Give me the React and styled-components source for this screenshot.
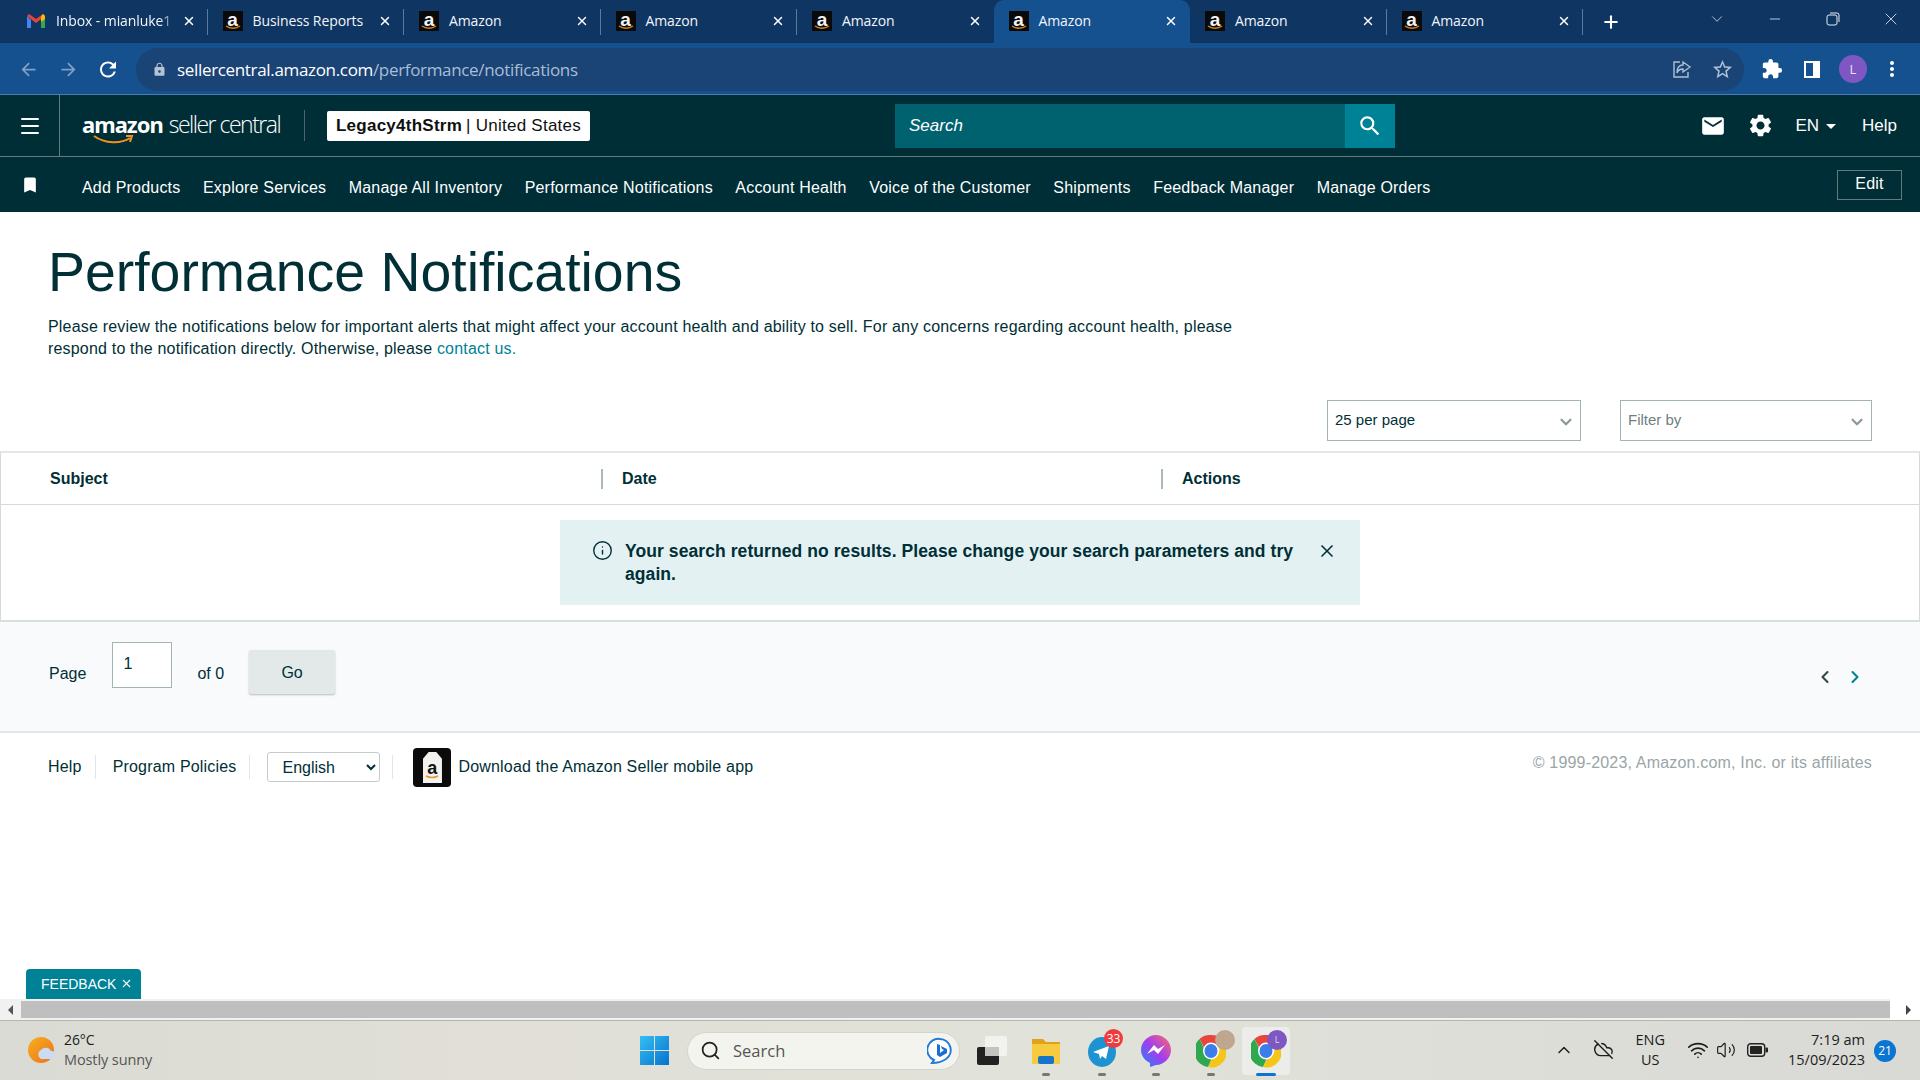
import React from 'react';
import styled, { createGlobalStyle } from 'styled-components';
import { MdArrowBack, MdArrowForward, MdRefresh, MdLock, MdStarBorder, MdExtension, MdMoreVert, MdBookmark, MdEmail, MdSettings, MdSearch, MdArrowDropDown } from 'react-icons/md';
import { X, ChevronDown, ChevronUp, ChevronLeft, ChevronRight, Info, Wifi, Volume2, CloudOff, Plus, Minus, Menu, Search as SearchIcon } from 'lucide-react';

const Global = createGlobalStyle`
  html, body { margin: 0; padding: 0; background: #fff; }
  * { box-sizing: border-box; }
  body { font-family: "Liberation Sans", Arial, sans-serif; color: #002f36; }
`;

const Page = styled.div`
  width: 1920px; height: 1080px; overflow: hidden;
  display: flex; flex-direction: column;
`;

/* ---------- browser chrome ---------- */
const TabStrip = styled.div`
  height: 43px; flex: none; background: #0f3563; display: flex; padding-left: 11px; color: #fff;
  font-family: "Open Sans", sans-serif; font-size: 14px;
`;
const Tab = styled.div`
  width: 196.5px; height: 43px; flex: none; display: flex; align-items: center; padding: 0 12px 2px 15px;
  position: relative; border-radius: 10px 10px 0 0;
  background: ${p => p.$active ? '#15508f' : 'transparent'};
  &::after {
    content: ''; position: absolute; right: 0; top: 9px; height: 26px; width: 1px;
    background: ${p => p.$sep ? '#5d7a9c' : 'transparent'};
  }
`;
const TabTitle = styled.span`
  flex: 1; margin-left: 10px; white-space: nowrap; letter-spacing: -0.1px; line-height: 20px; color: #f2f6fa;
  ${p => p.$fade ? 'overflow: hidden; mask-image: linear-gradient(90deg, #000 85%, transparent 100%);' : ''}
`;
const Favicon = styled.span`
  width: 20px; height: 20px; flex: none; background: #0a0a0a; position: relative; display: block;
  color: #f4f4f4; font: bold 19px/18px "Liberation Sans", sans-serif; text-align: center;
  svg { position: absolute; left: 2px; bottom: 1px; }
`;
const TabClose = styled(X)`
  width: 14px; height: 14px; flex: none; margin-left: 4px; stroke-width: 2.5; color: #fff;
`;
const NewTab = styled(Plus)`
  width: 20px; height: 20px; margin: 1px 0 0 18px; align-self: center; stroke-width: 2.5;
`;
const WindowControls = styled.div`
  margin-left: auto; display: flex; align-items: flex-start; color: #e5ecf3; padding-top: 10px;
`;
const WinGlyph = styled.span`
  width: 58px; height: 18px; flex: none; display: flex; align-items: center; justify-content: center;
`;
const ToolBar = styled.div`
  height: 52px; flex: none; background: #15508f; border-bottom: 1px solid #4b7db5;
  display: flex; align-items: center; padding: 1px 0 0 16px; color: #fff;
`;
const NavBtn = styled.span`
  width: 24px; height: 24px; margin-right: 16px; flex: none; display: flex; align-items: center; justify-content: center;
  color: ${p => p.$dim ? '#7fa0c6' : '#fff'};
`;
const Omnibox = styled.div`
  width: 1608px; height: 43px; margin-left: 0; background: #1a4475; border-radius: 22px; flex: none;
  display: flex; align-items: center; padding: 0 0 0 16px; font: 17px "Open Sans", sans-serif; letter-spacing: -0.33px; color: #fff;
`;
const UrlPath = styled.span` color: #a9bdd5; `;
const OmniRight = styled.div`
  margin-left: auto; display: flex; align-items: center; gap: 19px; padding-right: 10px; color: #aebfd3;
`;
const UrlLock = styled(MdLock)` color: #b3c3d6; margin-right: 10px; flex: none; `;
const ToolIcons = styled.div`
  display: flex; align-items: center; color: #fff; margin-left: 17px; gap: 18px;
`;
const SidePanel = styled.svg` margin-left: 2px; `;
const MoreDots = styled(MdMoreVert)` margin-left: -5px; `;
const Avatar = styled.span`
  width: 28px; height: 28px; border-radius: 50%; background: #7e57c2; color: #e9e0f7; display: flex; align-items: center; justify-content: center;
  font: 13px "Open Sans", sans-serif; flex: none;
`;

/* ---------- seller header ---------- */
const SellerHeader = styled.header`
  height: 62px; flex: none; background: #002e36; border-bottom: 1px solid #66797c; display: flex; align-items: center; color: #fff;
`;
const Burger = styled.div`
  width: 60px; height: 61px; flex: none; border-right: 1px solid #66797c; display: flex; align-items: center; justify-content: center;
`;
const Logo = styled.div`
  margin-left: 22px; margin-right: 24px; width: 198px; flex: none; position: relative; display: flex; align-items: baseline; height: 34px; white-space: nowrap;
  svg { position: absolute; left: 11px; top: 26px; }
`;
const LogoAmazon = styled.span`
  font: bold 22px/30px "Noto Sans", sans-serif; letter-spacing: -1px;
`;
const LogoSeller = styled.span`
  margin-left: 6px; font: 300 23px/30px "Open Sans", sans-serif; letter-spacing: -1.5px;
`;
const VLine = styled.span`
  width: 1px; height: ${p => p.$h || 24}px; flex: none; background: ${p => p.$c || '#4d6468'}; display: block;
`;
const StoreBox = styled.div`
  margin-left: 22px; width: 263px; height: 30px; flex: none; background: #fff; border-radius: 2px; color: #0f1111;
  display: flex; align-items: center; justify-content: center; font-size: 17px; letter-spacing: .25px; white-space: nowrap;
  b { font-weight: bold; margin-right: 4px; }
`;
const SearchBox = styled.div`
  margin-left: 305px; width: 500px; height: 44px; flex: none; display: flex; background: #00616f;
`;
const SearchField = styled.div`
  flex: 1; padding-left: 14px; display: flex; align-items: center; font-style: italic; font-size: 17px;
`;
const SearchBtn = styled.div`
  width: 50px; background: #008296; display: flex; align-items: center; justify-content: center;
`;
const HeaderRight = styled.div`
  margin-left: auto; display: flex; align-items: center; padding-right: 23px; font-size: 17px;
`;
const Lang = styled.span`
  display: flex; align-items: center; margin: 0 19px 0 13px;
`;
const Gear = styled(MdSettings)` margin-left: 21px; margin-right: 8px; `;

/* ---------- favourites nav ---------- */
const FavNav = styled.nav`
  height: 55px; flex: none; background: #002e36; color: #fff; display: flex; align-items: center; font-size: 16px; letter-spacing: .2px; padding: 7px 0 0 20px; white-space: nowrap;
`;
const Bookmark = styled(MdBookmark)` margin: -6px 0 0 0; flex: none; `;
const FavLinks = styled.div`
  display: flex; gap: 22.5px; margin-left: 42px;
`;
const EditBtn = styled.div`
  margin: -7px 18px 0 auto; width: 65px; height: 30px; border: 1px solid #66797c; display: flex; align-items: center; justify-content: center; padding-bottom: 2px;
`;

/* ---------- content ---------- */
const Main = styled.main`
  flex: 1; position: relative; background: #fff; display: flex; flex-direction: column;
`;
const Intro = styled.div` padding: 30px 48px 0; `;
const Title = styled.h1`
  margin: 0; font-weight: normal; font-size: 55.4px; line-height: 60px; color: #002f36;
`;
const Lead = styled.p`
  margin: 14px 0 0; font-size: 16px; line-height: 22px; letter-spacing: .185px; color: #002f36;
  a { color: #008296; text-decoration: none; }
`;
const Controls = styled.div`
  margin-top: 40px; height: 41px; display: flex; justify-content: flex-end; gap: 39px; padding-right: 48px; flex: none;
`;
const Drop = styled.div`
  width: ${p => p.$w}px; height: 41px; border: 1px solid #a2b4b4; display: flex; align-items: center; justify-content: space-between;
  padding: 0 5px 2px 7px; font-size: 15px; color: ${p => p.$muted ? '#6f7f82' : '#002f36'};
  svg { color: #8a9a9c; margin-top: 5px; }
`;
const Table = styled.section`
  margin-top: 10px; border-top: 2px solid #e3e7e7; border-left: 1px solid #d5dbdb; border-right: 1px solid #d5dbdb; flex: none;
`;
const HeadRow = styled.div`
  height: 52px; border-bottom: 1px solid #d5dbdb; display: grid; grid-template-columns: 600px 560px 1fr; align-items: center; font-weight: bold; font-size: 16px;
`;
const HeadCell = styled.div`
  height: 20px; display: flex; align-items: center; padding-left: ${p => p.$first ? 49 : 19}px;
  border-left: ${p => p.$first ? 'none' : '2px solid #a9b9b9'};
`;
const EmptyRow = styled.div`
  height: 115px; padding-top: 15px; display: flex; justify-content: center;
`;
const Alert = styled.div`
  width: 800px; height: 85px; background: #e3f1f3; display: flex; align-items: flex-start; padding: 20px 0 0 32px;
`;
const AlertIcon = styled(Info)` flex: none; margin: 0; `;
const AlertText = styled.div`
  width: 672px; margin-left: 12px; font-weight: bold; font-size: 17.5px; letter-spacing: .08px; line-height: 23px; color: #002f36;
`;
const AlertClose = styled(X)` flex: none; margin: 1px 0 0 20px; `;
const Pager = styled.div`
  height: 113px; flex: none; background: #f9fafb; border-top: 2px solid #d9dfdf; border-bottom: 2px solid #e3e6e6; display: flex; align-items: flex-start; padding-left: 49px; font-size: 16px;
`;
const PagerLabel = styled.span` margin-top: 43px; `;
const PageInput = styled.input`
  width: 60px; height: 46px; margin: 20px 25px 0 26px; border: 1px solid #a2b4b4; background: #fff; padding: 0 0 3px 10px; font: 16px "Liberation Sans", sans-serif; color: #002f36; border-radius: 0; outline: none;
`;
const GoBtn = styled.div`
  width: 86px; height: 44px; margin: 28px 0 0 25px; background: #e3e9e9; border-radius: 2px; box-shadow: 0 1px 2px rgba(0,0,0,.25); display: flex; align-items: center; justify-content: center; padding-top: 1px;
`;
const PagerArrows = styled.div`
  margin: 45px 55px 0 auto; display: flex; gap: 10px;
`;
const Foot = styled.footer`
  height: 60px; flex: none; display: flex; align-items: center; padding: 8px 48px 0 48px; font-size: 16px; letter-spacing: .18px; color: #002f36;
`;
const FootLink = styled.span` white-space: nowrap; `;
const FootSep = styled(VLine)` margin: 0 ${p => p.$r || 17}px 0 ${p => p.$l || 13}px; `;
const LangSelect = styled.select`
  width: 113px; height: 30px; border: 1px solid #c3cccc; border-radius: 3px; background: #fff; padding-left: 10px; font: 16px "Liberation Sans", sans-serif; color: #002f36;
`;
const AppBadge = styled.span`
  width: 38px; height: 39px; flex: none; margin-right: 7px; background: #0b0b0b; border-radius: 4px; display: flex; align-items: center; justify-content: center; position: relative;
  svg { position: absolute; left: 12px; bottom: 8px; }
`;
const AppTag = styled.span`
  width: 19px; height: 31px; margin-top: 1px; background: #f2f2ee; clip-path: polygon(30% 0, 70% 0, 100% 22%, 100% 100%, 0 100%, 0 22%);
  color: #111; font: bold 18px/32px "Liberation Sans", sans-serif; text-align: center; display: block;
`;
const Copyright = styled.span`
  margin-left: auto; margin-top: -8px; color: #9aa5a7; white-space: nowrap;
`;
const Feedback = styled.div`
  position: absolute; left: 26px; bottom: 0; width: 115px; height: 30px; background: #008296; color: #fff; border-radius: 4px 4px 0 0;
  display: flex; align-items: center; padding-left: 15px; font-size: 14px; gap: 4px; padding-bottom: 1px;
`;

/* ---------- scrollbar ---------- */
const ScrollBar = styled.div`
  height: 21px; flex: none; background: #f1f1f1; display: flex; align-items: center; padding: 0;
`;
const ScrollBtn = styled.span`
  width: ${p => p.$w}px; height: 21px; flex: none; display: flex; align-items: center; justify-content: ${p => p.$right ? 'flex-end' : 'center'};
  padding-right: ${p => p.$right ? 9 : 0}px; background: ${p => p.$white ? '#fff' : 'transparent'};
  &::before {
    content: ''; border-style: solid; border-width: 5px ${p => p.$right ? 0 : '5px'} 5px ${p => p.$right ? '5px' : 0};
    border-color: transparent ${p => p.$right ? 'transparent' : '#555'} transparent ${p => p.$right ? '#444' : 'transparent'};
  }
`;
const ScrollThumb = styled.span` flex: 1; height: 17px; background: #bfbfbf; `;

/* ---------- taskbar ---------- */
const TaskBar = styled.div`
  height: 60px; flex: none; border-top: 1px solid #b4b5b0; background: linear-gradient(90deg, #dadbd4 0%, #e1dfd7 25%, #e1e2d9 55%, #d9dad6 100%);
  display: flex; align-items: center; font-family: "Open Sans", sans-serif; color: #1c1c1c; position: relative;
`;
const Weather = styled.div`
  width: 612px; margin-left: 28px; flex: none; display: flex; align-items: center; gap: 9px; padding-bottom: 2px;
`;
const WeatherText = styled.div`
  font-size: 14px; line-height: 20px; letter-spacing: -0.1px;
  small { display: block; font-size: 14.5px; color: #555; }
`;
const TaskCenter = styled.div` display: flex; align-items: center; flex: none; `;
const TaskSearch = styled.div`
  width: 273px; height: 38px; margin: 0 17px 0 18px; border-radius: 19px; background: #f3f4ee; border: 1px solid #d3d4cd; display: flex; align-items: center; padding: 0 6px 0 12px; font-size: 16.5px; color: #555; gap: 12px;
`;
const TaskIcon = styled.span`
  width: ${p => p.$w || 55}px; height: 48px; flex: none; position: relative; display: flex; align-items: center; justify-content: center; border-radius: 4px;
  margin-left: ${p => p.$ml || 0}px;
  background: ${p => p.$active ? '#ecedea' : 'transparent'};
  &::after {
    content: ''; position: absolute; bottom: -1px; left: 50%; transform: translateX(-50%); height: 3px; border-radius: 2px;
    width: ${p => p.$active ? 20 : p.$open ? 8 : 0}px; background: ${p => p.$active ? '#0b76d2' : '#77786f'};
  }
`;
const Count = styled.span`
  position: absolute; top: 2px; right: 6px; min-width: 19px; height: 19px; border-radius: 10px; background: #ee3b3b; color: #fff; font: 12px/19px "Open Sans", sans-serif; text-align: center;
`;
const OverAvatar = styled.span`
  position: absolute; top: 3px; right: 3px; width: 20px; height: 20px; border-radius: 50%; background: ${p => p.$bg}; color: #ddd; font: 9px/20px "Open Sans", sans-serif; text-align: center;
`;
const Tray = styled.div`
  margin-left: auto; display: flex; align-items: center; padding: 0 24px 2px 0; font-size: 14.5px; line-height: 20px;
`;
const TrayCell = styled.span`
  margin-left: ${p => p.$ml || 0}px; display: flex; align-items: center; justify-content: center; text-align: center; flex: none;
`;
const Clock = styled.div` margin-left: 20px; text-align: right; white-space: nowrap; color: #222; `;
const Notif = styled.span`
  margin: 2px 0 0 9px; width: 22px; height: 22px; border-radius: 50%; background: #0b76d2; color: #fff; font-size: 12px; line-height: 22px; text-align: center; flex: none;
`;

const Smile = () => (
  <svg width="16" height="5" viewBox="0 0 16 5"><path d="M1 1c4 3 10 3 14 0" fill="none" stroke="#d8821d" strokeWidth="1.5" /></svg>
);
const AmazonFav = () => <Favicon>a<Smile /></Favicon>;
const GmailFav = () => (
  <svg width="20" height="20" viewBox="0 0 20 20" style={{ flex: 'none' }}>
    <path d="M1 5v12h4V9z" fill="#4285f4" /><path d="M19 5v12h-4V9z" fill="#34a853" />
    <path d="M1 5l9 7 9-7-2-2-7 5-7-5z" fill="#ea4335" /><path d="M15 5.5l2-2.500 2 2V8l-4 3z" fill="#fbbc04" />
  </svg>
);
const Chrome = () => (
  <svg width="30" height="34" viewBox="0 0 30 34">
    <path d="M15 1a15 16 0 0 1 14 9H15a7 7 0 0 0-6.500 4L3.500 5A15 16 0 0 1 15 1z" fill="#e8453c" />
    <path d="M3.500 5l6 12a6 7 0 0 0 7 6L12 33A15 16 0 0 1 3.500 5z" fill="#2fa84f" />
    <path d="M29 10a15 16 0 0 1-17 23l5-10a7 7 0 0 0 3-13z" fill="#f5c518" />
    <ellipse cx="15" cy="17" rx="8" ry="8.500" fill="#fff" /><ellipse cx="15" cy="17" rx="6.500" ry="7" fill="#3b7de9" />
  </svg>
);
const tabs = ['Business Reports', 'Amazon', 'Amazon', 'Amazon', 'Amazon', 'Amazon', 'Amazon'];
const links = ['Add Products', 'Explore Services', 'Manage All Inventory', 'Performance Notifications', 'Account Health', 'Voice of the Customer', 'Shipments', 'Feedback Manager', 'Manage Orders'];

export default function App() {
  return (
    <Page>
      <Global />
      <TabStrip>
        <Tab $sep><GmailFav /><TabTitle $fade>Inbox - mianluke1</TabTitle><TabClose /></Tab>
        {tabs.map((t, i) => (
          <Tab key={i} $active={i === 4} $sep={i !== 3 && i !== 4}><AmazonFav /><TabTitle>{t}</TabTitle><TabClose /></Tab>
        ))}
        <NewTab />
        <WindowControls>
          <WinGlyph><ChevronDown size={18} strokeWidth={1} /></WinGlyph>
          <WinGlyph><Minus size={16} strokeWidth={1.2} /></WinGlyph>
          <WinGlyph>
            <svg width="14" height="14" viewBox="0 0 14 14" fill="none" stroke="currentColor"><rect x="1" y="3" width="10" height="10" rx="2" /><path d="M4 1h7a2 2 0 0 1 2 2v7" /></svg>
          </WinGlyph>
          <WinGlyph><X size={20} strokeWidth={1} /></WinGlyph>
        </WindowControls>
      </TabStrip>
      <ToolBar>
        <NavBtn $dim><MdArrowBack size={21} /></NavBtn>
        <NavBtn $dim><MdArrowForward size={21} /></NavBtn>
        <NavBtn><MdRefresh size={25} /></NavBtn>
        <Omnibox>
          <UrlLock size={15} />
          sellercentral.amazon.com<UrlPath>/performance/notifications</UrlPath>
          <OmniRight>
            <svg width="20" height="20" viewBox="0 0 20 20" fill="none" stroke="currentColor" strokeWidth="1.4"><path d="M8 3H2v15h14v-5" /><path d="M11 3l7 5-7 5v-3c-3 0-5 1-6 4 0-5 2-8 6-8z" /></svg>
            <MdStarBorder size={23} />
          </OmniRight>
        </Omnibox>
        <ToolIcons>
          <MdExtension size={22} />
          <SidePanel width="18" height="19" viewBox="0 0 18 19"><path d="M1 1h16v17H1z" fill="#fff" /><path d="M3 3h7v13H3z" fill="#15508f" /></SidePanel>
          <Avatar>L</Avatar>
          <MoreDots size={24} />
        </ToolIcons>
      </ToolBar>

      <SellerHeader>
        <Burger><Menu size={24} strokeWidth={2} /></Burger>
        <Logo>
          <LogoAmazon>amazon</LogoAmazon><LogoSeller>seller central</LogoSeller>
          <svg width="42" height="10" viewBox="0 0 42 10" fill="none"><path d="M1 1c11 8 27 8 36 2M33 1l6 0-2 6" stroke="#f0931e" strokeWidth="2" /></svg>
        </Logo>
        <VLine $h={31} />
        <StoreBox><b>Legacy4thStrm</b> | United States</StoreBox>
        <SearchBox>
          <SearchField>Search</SearchField>
          <SearchBtn><MdSearch size={26} /></SearchBtn>
        </SearchBox>
        <HeaderRight>
          <MdEmail size={26} />
          <Gear size={27} />
          <Lang>EN<MdArrowDropDown size={24} /></Lang>
          Help
        </HeaderRight>
      </SellerHeader>
      <FavNav>
        <Bookmark size={20} />
        <FavLinks>{links.map(l => <span key={l}>{l}</span>)}</FavLinks>
        <EditBtn>Edit</EditBtn>
      </FavNav>

      <Main>
        <Intro>
          <Title>Performance Notifications</Title>
          <Lead>
            Please review the notifications below for important alerts that might affect your account health and ability to sell. For any concerns regarding account health, please<br />
            respond to the notification directly. Otherwise, please <a href="#c">contact us.</a>
          </Lead>
        </Intro>
        <Controls>
          <Drop $w={254}>25 per page<ChevronDown size={18} strokeWidth={3} /></Drop>
          <Drop $w={252} $muted>Filter by<ChevronDown size={18} strokeWidth={3} /></Drop>
        </Controls>
        <Table>
          <HeadRow>
            <HeadCell $first>Subject</HeadCell>
            <HeadCell>Date</HeadCell>
            <HeadCell>Actions</HeadCell>
          </HeadRow>
          <EmptyRow>
            <Alert>
              <AlertIcon size={21} strokeWidth={1.6} />
              <AlertText>Your search returned no results. Please change your search parameters and try again.</AlertText>
              <AlertClose size={20} strokeWidth={2} />
            </Alert>
          </EmptyRow>
        </Table>
        <Pager>
          <PagerLabel>Page</PagerLabel>
          <PageInput value="1" readOnly />
          <PagerLabel>of 0</PagerLabel>
          <GoBtn>Go</GoBtn>
          <PagerArrows>
            <ChevronLeft size={20} strokeWidth={2.5} color="#30474b" />
            <ChevronRight size={20} strokeWidth={2.5} color="#008296" />
          </PagerArrows>
        </Pager>
        <Foot>
          <FootLink>Help</FootLink>
          <FootSep $c="#e1e5e5" />
          <FootLink>Program Policies</FootLink>
          <FootSep $c="#e1e5e5" />
          <LangSelect defaultValue="English"><option>English</option></LangSelect>
          <FootSep $c="#e1e5e5" $l={12} $r={20} />
          <AppBadge>
            <AppTag>a</AppTag>
            <svg width="14" height="4" viewBox="0 0 14 4"><path d="M1 1c4 2 8 2 12 0" fill="none" stroke="#e8912a" strokeWidth="1.5" /></svg>
          </AppBadge>
          <FootLink>Download the Amazon Seller mobile app</FootLink>
          <Copyright>© 1999-2023, Amazon.com, Inc. or its affiliates</Copyright>
        </Foot>
        <Feedback>FEEDBACK<X size={13} /></Feedback>
      </Main>

      <ScrollBar>
        <ScrollBtn $w={21} />
        <ScrollThumb />
        <ScrollBtn $w={30} $right $white />
      </ScrollBar>

      <TaskBar>
        <Weather>
          <svg width="27" height="28" viewBox="0 0 27 28">
            <defs><linearGradient id="sun" x1="0" y1="0" x2="1" y2="1"><stop offset="0" stopColor="#f5b120" /><stop offset="1" stopColor="#f0701a" /></linearGradient></defs>
            <circle cx="13" cy="14" r="13" fill="url(#sun)" />
            <path d="M13 23a5 5 0 0 1 0-9 6 6 0 0 1 10 1 4 4 0 0 1 1 8z" fill="#c9dcf3" />
          </svg>
          <WeatherText>26°C<small>Mostly sunny</small></WeatherText>
        </Weather>
        <TaskCenter>
          <svg width="29" height="29" viewBox="0 0 29 29">
            <defs><linearGradient id="win" x1="0" y1="0" x2="1" y2="1"><stop offset="0" stopColor="#35c0f5" /><stop offset="1" stopColor="#0672cc" /></linearGradient></defs>
            <path d="M0 0h14v14H0zM15 0h14v14H15zM0 15h14v14H0zM15 15h14v14H15z" fill="url(#win)" />
          </svg>
          <TaskSearch>
            <SearchIcon size={21} color="#222" strokeWidth={2} />
            Search
            <svg width="26" height="28" viewBox="0 0 26 28" style={{ marginLeft: 'auto' }}>
              <path d="M13 2a11 11 0 0 1 6 20c-3 2-8 4-14 4l2-3A11 11 0 0 1 13 2z" fill="#fff" stroke="#1f7ad6" strokeWidth="2" />
              <path d="M10 7l3 1v8l4-3-2-1-1-3 6 3v4l-7 4-3-2z" fill="#1a6fd0" />
            </svg>
          </TaskSearch>
          <TaskIcon $w={30}>
            <svg width="30" height="29" viewBox="0 0 30 29"><rect x="0" y="11" width="22" height="18" rx="2" fill="#222" /><rect x="8" y="0" width="22" height="20" rx="2" fill="#f2f2ee" /><rect x="8" y="11" width="14" height="9" fill="#c3c3bf" /></svg>
          </TaskIcon>
          <TaskIcon $open $w={55} $ml={11}>
            <svg width="30" height="30" viewBox="0 0 30 30"><path d="M1 3h11l3 3h14v22H1z" fill="#e0a317" /><path d="M1 8h28v20H1z" fill="#f7cb3f" /><rect x="7" y="20" width="16" height="8" rx="2" fill="#1675c9" /></svg>
          </TaskIcon>
          <TaskIcon $open $ml={1}>
            <svg width="28" height="32" viewBox="0 0 28 32"><ellipse cx="14" cy="17" rx="14" ry="15" fill="#1d93d2" /><path d="M5 17l16-6-3 13-4-3-2 3-1-5z" fill="#fff" /></svg>
            <Count>33</Count>
          </TaskIcon>
          <TaskIcon $open $ml={-1}>
            <svg width="30" height="34" viewBox="0 0 30 34">
              <defs><linearGradient id="msg" x1="0" y1="1" x2="1" y2="0"><stop offset="0" stopColor="#1e88f5" /><stop offset=".5" stopColor="#a33df0" /><stop offset="1" stopColor="#ff6a68" /></linearGradient></defs>
              <path d="M15 1c8 0 15 7 15 15s-7 15-15 15l-6 2v-4C3 26 0 21 0 16 0 8 7 1 15 1z" fill="url(#msg)" />
              <path d="M6 20l7-9 4 4 7-4-7 9-4-4z" fill="#fff" />
            </svg>
          </TaskIcon>
          <TaskIcon $open><Chrome /><OverAvatar $bg="#bfa68e" /></TaskIcon>
          <TaskIcon $active $w={48} $ml={4}><Chrome /><OverAvatar $bg="#7e57c2">L</OverAvatar></TaskIcon>
        </TaskCenter>
        <Tray>
          <TrayCell><ChevronUp size={20} strokeWidth={1.7} /></TrayCell>
          <TrayCell $ml={19}><CloudOff size={21} strokeWidth={1.6} /></TrayCell>
          <TrayCell $ml={22}>ENG<br />US</TrayCell>
          <TrayCell $ml={22}><Wifi size={22} strokeWidth={1.8} /></TrayCell>
          <TrayCell $ml={7}><Volume2 size={20} strokeWidth={1.4} /></TrayCell>
          <TrayCell $ml={11}>
            <svg width="21" height="14" viewBox="0 0 21 14"><rect x=".7" y=".7" width="17" height="12.600" rx="3" fill="none" stroke="#222" strokeWidth="1.4" /><rect x="3" y="3" width="12" height="8" rx="1" fill="#222" /><rect x="18.500" y="4.500" width="2.500" height="5" rx="1" fill="#222" /></svg>
          </TrayCell>
          <Clock>7:19 am<br />15/09/2023</Clock>
          <Notif>21</Notif>
        </Tray>
      </TaskBar>
    </Page>
  );
}
